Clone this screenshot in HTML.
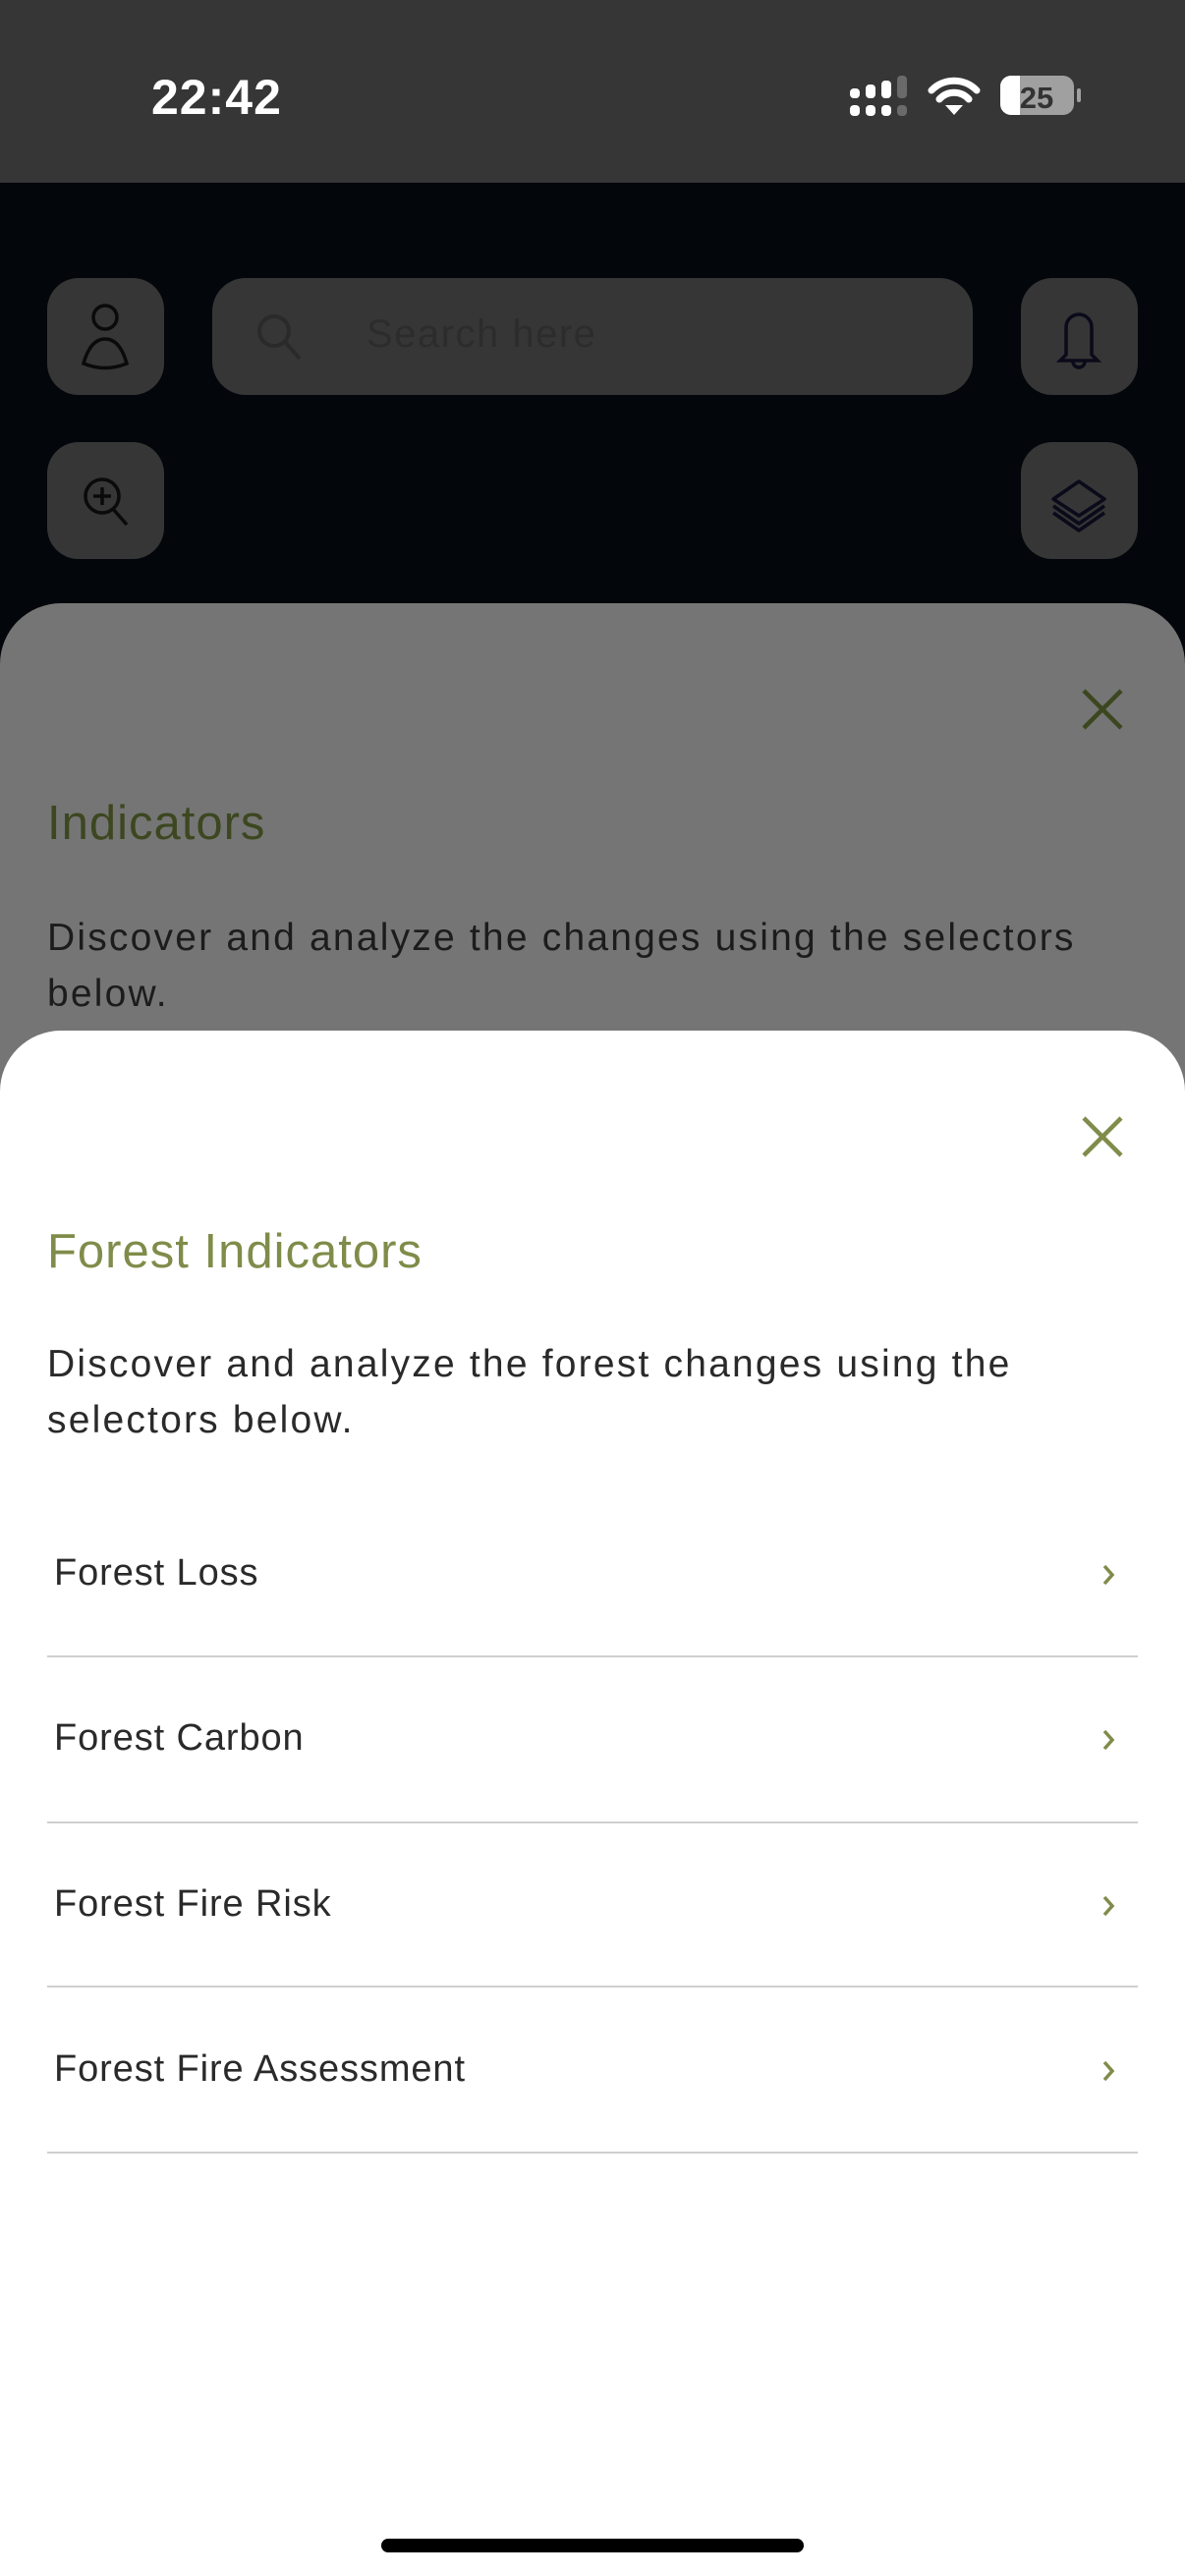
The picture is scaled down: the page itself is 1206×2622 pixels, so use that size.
<!DOCTYPE html>
<html><head><meta charset="utf-8"><style>
*{margin:0;padding:0;box-sizing:border-box}
html{width:1206px;height:2622px;overflow:hidden}
body{width:1206px;height:2622px;overflow:hidden;background:#03060a;font-family:"Liberation Sans",sans-serif;position:relative}
.abs{position:absolute}
.status{left:0;top:0;width:1206px;height:186px;background:#363636}
.btn{background:#363636;border-radius:32px;width:119px;height:119px}
.grey{left:0;top:614px;width:1206px;height:2008px;background:#757575;border-radius:62px 62px 0 0}
.white{left:0;top:1049px;width:1206px;height:1573px;background:#fff;border-radius:62px 62px 0 0}
.item{left:55px;font-size:38px;color:#2a2a2a;letter-spacing:0.9px}
.line{left:48px;width:1110px;height:2px;background:#cfcfcf}
.desc{font-size:39px;line-height:57px;letter-spacing:2.2px;white-space:nowrap}
.ttl{font-size:49px;letter-spacing:1px}
</style></head><body>
<div class="abs status"></div>
<div class="abs" style="left:154px;top:70px;font-size:50px;font-weight:bold;color:#fff;letter-spacing:1px">22:42</div>
<svg class="abs" style="left:860px;top:72px" width="250" height="52" viewBox="860 72 250 52">
 <g fill="#fff">
  <rect x="865" y="90" width="10" height="10" rx="4"/><rect x="865" y="107" width="10" height="11" rx="4"/>
  <rect x="881" y="86" width="10" height="14" rx="4"/><rect x="881" y="107" width="10" height="11" rx="4"/>
  <rect x="897" y="82" width="10" height="18" rx="4"/><rect x="897" y="107" width="10" height="11" rx="4"/>
 </g>
 <g fill="#6a6a6a"><rect x="913" y="77" width="10" height="23" rx="4"/><rect x="913" y="107" width="10" height="11" rx="4"/></g>
 <path d="M948 92 A32 32 0 0 1 994 92" stroke="#fff" stroke-width="7" fill="none" stroke-linecap="round"/>
 <path d="M956 101 A20 20 0 0 1 986 101" stroke="#fff" stroke-width="7" fill="none" stroke-linecap="round"/>
 <path d="M962 107 L971 117 L980 107 Z" fill="#fff"/>
 <rect x="1018" y="77" width="75" height="40" rx="11" fill="#a0a0a0"/>
 <path d="M1029 77 H1038 V117 H1029 A11 11 0 0 1 1018 106 V88 A11 11 0 0 1 1029 77Z" fill="#fff"/>
 <rect x="1096" y="90" width="4" height="14" rx="2" fill="#a0a0a0"/>
 <text x="1055" y="110" font-size="31" font-weight="bold" fill="#333" text-anchor="middle" font-family="Liberation Sans">25</text>
</svg>

<div class="abs btn" style="left:48px;top:283px"></div>
<svg class="abs" style="left:48px;top:283px" width="119" height="119" viewBox="0 0 119 119" fill="none" stroke="#0a0a0a" stroke-width="3.5">
 <circle cx="59" cy="40" r="12"/><path d="M37 87 Q44 62 59 62 Q74 62 81 87 Q59 96 37 87Z"/>
</svg>
<div class="abs" style="left:216px;top:283px;width:774px;height:119px;background:#363636;border-radius:34px"></div>
<svg class="abs" style="left:255px;top:313px" width="60" height="60" fill="none" stroke="#2a2a2a" stroke-width="4"><circle cx="24" cy="24" r="15"/><path d="M35 35 L50 52"/></svg>
<div class="abs" style="left:373px;top:318px;font-size:40px;color:#2c2c2c;letter-spacing:1.5px">Search here</div>
<div class="abs btn" style="left:1039px;top:283px"></div>
<svg class="abs" style="left:1039px;top:283px" width="119" height="119" viewBox="0 0 119 119" fill="none" stroke="#0a0a1a" stroke-width="3.5">
 <path d="M46 78 V50 A13 13 0 0 1 72 50 V78 L78 84 H40 Z"/><path d="M53 85 A6 6 0 0 0 65 85"/>
</svg>
<div class="abs btn" style="left:48px;top:450px"></div>
<svg class="abs" style="left:48px;top:450px" width="119" height="119" viewBox="0 0 119 119" fill="none" stroke="#0a0a0a" stroke-width="3.5">
 <circle cx="56" cy="55" r="17"/><path d="M56 46 V64 M47 55 H65 M67 68 L81 84"/>
</svg>
<div class="abs btn" style="left:1039px;top:450px"></div>
<svg class="abs" style="left:1039px;top:450px" width="119" height="119" viewBox="0 0 119 119" fill="none" stroke="#0a0a1a" stroke-width="3.5" stroke-linejoin="round">
 <path d="M59 40 L85 58 L59 75 L33 58 Z"/><path d="M33 65 L59 83 L85 65"/><path d="M33 72 L59 90 L85 72"/>
</svg>

<div class="abs grey"></div>
<svg class="abs" style="left:1100px;top:700px" width="44" height="44" stroke="#3c4720" stroke-width="4.5"><path d="M3 3 L41 41 M41 3 L3 41"/></svg>
<div class="abs ttl" style="left:48px;top:810px;color:#3c4720">Indicators</div>
<div class="abs desc" style="left:48px;top:926px;color:#1c1c1c">Discover and analyze the changes using the selectors<br>below.</div>

<div class="abs white"></div>
<svg class="abs" style="left:1100px;top:1135px" width="44" height="44" stroke="#7f8c4a" stroke-width="4.5"><path d="M3 3 L41 41 M41 3 L3 41"/></svg>
<div class="abs ttl" style="left:48px;top:1246px;color:#7f8c4a">Forest Indicators</div>
<div class="abs desc" style="left:48px;top:1360px;color:#2a2a2a">Discover and analyze the forest changes using the<br>selectors below.</div>

<div class="abs item" style="top:1580px">Forest Loss</div>
<div class="abs line" style="top:1685px"></div>
<div class="abs item" style="top:1748px">Forest Carbon</div>
<div class="abs line" style="top:1854px"></div>
<div class="abs item" style="top:1917px">Forest Fire Risk</div>
<div class="abs line" style="top:2021px"></div>
<div class="abs item" style="top:2085px">Forest Fire Assessment</div>
<div class="abs line" style="top:2190px"></div>
<svg class="abs" style="left:1118px;top:1588px" width="20" height="30" fill="none" stroke="#7f8c4a" stroke-width="3.5"><path d="M6 6 L14 15 L6 24"/></svg>
<svg class="abs" style="left:1118px;top:1756px" width="20" height="30" fill="none" stroke="#7f8c4a" stroke-width="3.5"><path d="M6 6 L14 15 L6 24"/></svg>
<svg class="abs" style="left:1118px;top:1925px" width="20" height="30" fill="none" stroke="#7f8c4a" stroke-width="3.5"><path d="M6 6 L14 15 L6 24"/></svg>
<svg class="abs" style="left:1118px;top:2093px" width="20" height="30" fill="none" stroke="#7f8c4a" stroke-width="3.5"><path d="M6 6 L14 15 L6 24"/></svg>

<div class="abs" style="left:388px;top:2584px;width:430px;height:14px;background:#000;border-radius:7px"></div>
</body></html>
